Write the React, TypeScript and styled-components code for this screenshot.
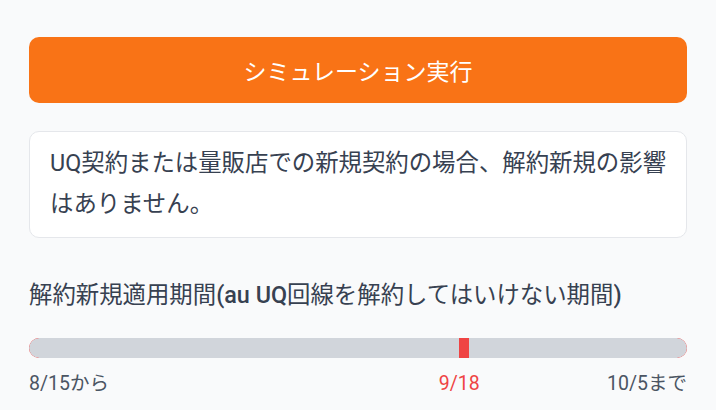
import React from 'react'
import styled, { createGlobalStyle } from 'styled-components'

const GlobalStyle = createGlobalStyle`
  body {
    margin: 0;
    background: #f9fafb;
    font-family: Roboto, "Noto Sans CJK JP", sans-serif;
    color: #374151;
  }
`

const Page = styled.div`
  padding: 37px 29px 0 29px;
  width: 658px;
`

const RunButton = styled.button`
  display: block;
  width: 100%;
  height: 66px;
  border: none;
  border-radius: 10px;
  background: #f97316;
  color: #ffffff;
  font-family: inherit;
  font-size: 23px;
  cursor: pointer;
`

const Notice = styled.div`
  margin-top: 28px;
  padding: 11px 16px 12px 20px;
  background: #ffffff;
  border: 1px solid #e5e7eb;
  border-radius: 10px;
  font-size: 23.4px;
  line-height: 41px;
  color: #374151;
`

const Title = styled.div`
  margin-top: 41px;
  font-size: 23.4px;
  line-height: 32px;
  color: #374151;
`

// latin part of the heading is set a touch heavier
const Latin = styled.span`
  font-weight: 500;
`

const Track = styled.div`
  position: relative;
  margin-top: 27px;
  height: 20px;
  border-radius: 10px;
  background: #ef4444;
  overflow: hidden;
`

const TrackFill = styled.div`
  height: 100%;
  border-radius: 10px;
  background: #d1d5db;
`

const Marker = styled.div`
  position: absolute;
  top: 0;
  width: 10px;
  height: 100%;
  background: #ef4444;
`

const Labels = styled.div`
  position: relative;
  margin-top: 13px;
  display: flex;
  justify-content: space-between;
  font-size: 19.5px;
  line-height: 26px;
  color: #4b5563;
`

const Today = styled.span`
  position: absolute;
  top: 0;
  transform: translateX(-50%);
  color: #ef4444;
`

const start = new Date(2024, 7, 15)
const end = new Date(2024, 9, 6)
const today = new Date(2024, 8, 18)
const pct = ((today.getTime() - start.getTime()) / (end.getTime() - start.getTime())) * 100

const App = () => {
  return (
    <Page>
      <GlobalStyle />
      <RunButton>シミュレーション実行</RunButton>
      <Notice>UQ契約または量販店での新規契約の場合、解約新規の影響はありません。</Notice>
      <Title>
        解約新規適用期間<Latin>(au UQ</Latin>回線を解約してはいけない期間<Latin>)</Latin>
      </Title>
      <Track>
        <TrackFill />
        <Marker style={{ left: `${pct}%` }} />
      </Track>
      <Labels>
        <span>8/15から</span>
        <Today style={{ left: `${pct}%` }}>9/18</Today>
        <span>10/5まで</span>
      </Labels>
    </Page>
  )
}

export default App
